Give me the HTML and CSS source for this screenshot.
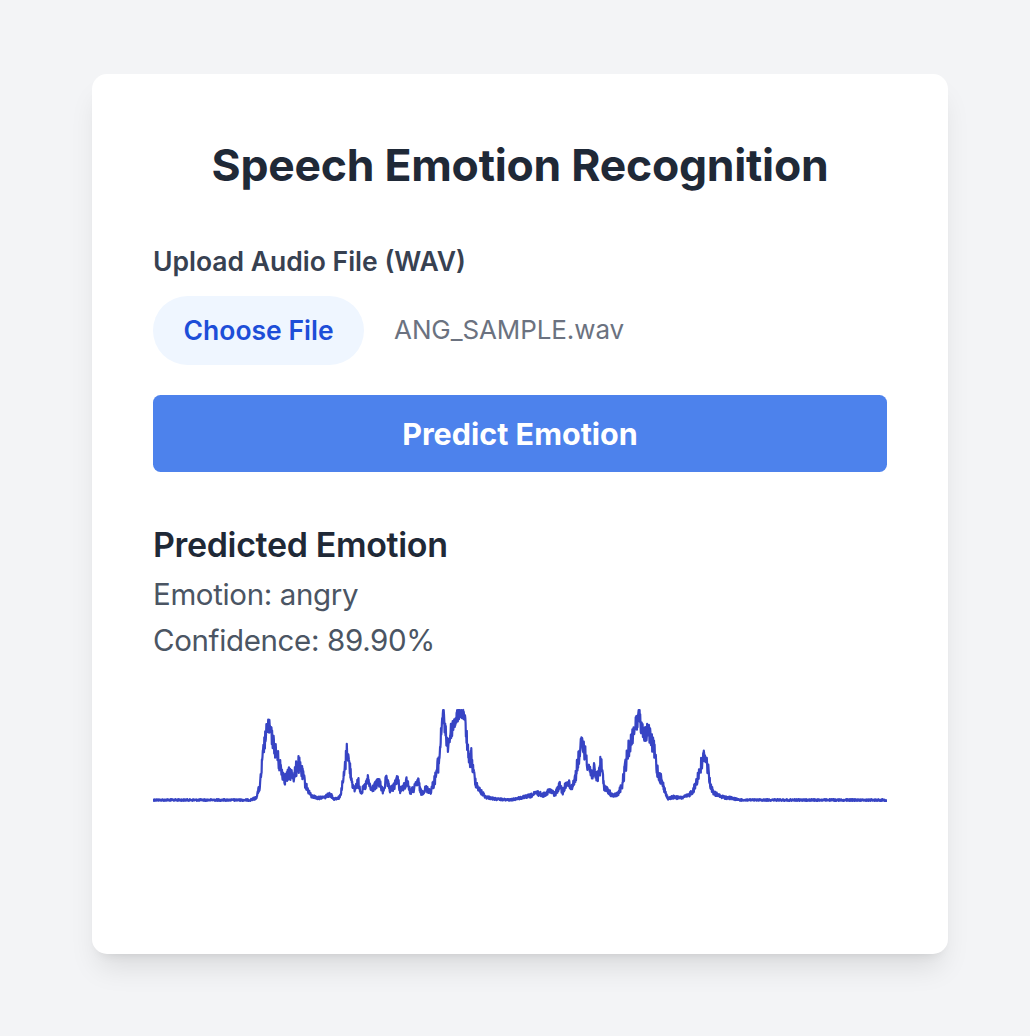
FILE: index.html
```html
<!DOCTYPE html>
<html lang="en">
<head>
<meta charset="utf-8">
<title>Speech Emotion Recognition</title>
<link rel="stylesheet" href="styles.css">
</head>
<body>
<main class="card">
  <h1 class="title">Speech Emotion Recognition</h1>
  <label class="field-label">Upload Audio File (WAV)</label>
  <div class="file-row">
    <span class="file-btn">Choose File</span>
    <span class="file-name">ANG_SAMPLE.wav</span>
  </div>
  <button class="predict-btn" type="button">Predict Emotion</button>
  <section class="result">
    <h2 class="result-title">Predicted Emotion</h2>
    <p class="result-line">Emotion: angry</p>
    <p class="result-line">Confidence: 89.90%</p>
  </section>
  <svg class="waveform" id="waveform" viewBox="0 0 734 199" width="734" height="199" xmlns="http://www.w3.org/2000/svg">
    <path id="wave-path" d="" fill="none" stroke="#3744c4" stroke-width="2.2" stroke-linejoin="round" stroke-linecap="round"/>
  </svg>
</main>
<script src="wave.js"></script>
</body>
</html>
```

FILE: styles.css
```css
* { box-sizing: border-box; }

body {
  margin: 0;
  background: #f3f4f6;
  font-family: Inter, "Noto Sans", "Liberation Sans", sans-serif;
  min-height: 1036px;
}

.card {
  width: 856px;
  margin: 74px 0 0 92px;
  padding: 61px;
  background: #ffffff;
  border-radius: 15px;
  box-shadow: 0 19px 29px -6px rgba(0, 0, 0, 0.1), 0 8px 11px -8px rgba(0, 0, 0, 0.1);
  display: flex;
  flex-direction: column;
}

.title {
  margin: 0 0 46px;
  font-size: 44.5px;
  line-height: 61px;
  font-weight: 700;
  color: #1f2937;
  text-align: center;
  letter-spacing: -0.25px;
}

.field-label {
  display: block;
  font-size: 26.5px;
  line-height: 38px;
  font-weight: 600;
  color: #374151;
  margin-bottom: 15.5px;
}

.file-row {
  display: flex;
  align-items: center;
}

.file-btn {
  display: inline-block;
  padding: 15.5px 30.5px;
  border-radius: 999px;
  background: #eff6ff;
  color: #1d4ed8;
  font-size: 26.5px;
  line-height: 38px;
  font-weight: 600;
}

.file-name {
  margin-left: 30px;
  font-size: 26px;
  line-height: 38px;
  color: #6b7280;
  letter-spacing: -0.1px;
}

.predict-btn {
  margin-top: 30.5px;
  height: 76.5px;
  width: 100%;
  border: 0;
  border-radius: 7.6px;
  background: #4d82ec;
  color: #ffffff;
  font-family: inherit;
  font-size: 30.5px;
  font-weight: 700;
}

.result {
  margin-top: 46px;
}

.result-title {
  margin: 0;
  font-size: 34px;
  line-height: 53.5px;
  font-weight: 600;
  color: #1f2937;
  letter-spacing: -0.35px;
}

.result-line {
  margin: 0;
  font-size: 29.5px;
  line-height: 46px;
  color: #4b5563;
  letter-spacing: -0.35px;
}

.waveform {
  display: block;
  margin-top: 30.5px;
}
```

FILE: wave.js
```js
(function () {
  var pts = [
    [153,799],[250,799],[256,797],[260,785],[264,745],[268,723],[271,733],[275,748],[280,765],[285,778],
    [290,772],[294,775],[298,762],[302,772],[306,785],[311,795],[318,797],[325,796],[330,793],[334,798],
    [340,796],[344,775],[347,748],[350,768],[354,790],[358,780],[361,791],[365,786],[368,779],[371,789],
    [375,785],[379,781],[383,791],[386,779],[390,789],[394,786],[397,776],[400,789],[404,786],[407,779],
    [410,791],[414,788],[418,780],[421,792],[426,788],[431,790],[435,778],[439,760],[441,735],[443,708],
    [445,730],[448,745],[451,730],[454,722],[457,715],[460,708],[464,712],[467,740],[469,765],[471,752],
    [473,770],[476,782],[480,790],[486,796],[495,798],[510,799],[520,797],[530,795],[537,792],[543,794],
    [549,790],[555,793],[560,784],[563,792],[567,780],[571,787],[575,778],[579,755],[582,741],[585,752],
    [588,762],[591,773],[594,770],[597,778],[601,762],[604,785],[608,790],[613,795],[618,793],[622,785],
    [625,768],[628,750],[631,740],[634,728],[637,720],[639,712],[642,730],[645,735],[648,727],[651,740],
    [654,748],[657,768],[661,778],[665,790],[668,798],[673,796],[680,797],[688,795],[694,788],[698,775],
    [702,762],[705,752],[708,768],[711,787],[715,793],[722,796],[730,797],[740,799],[887,799]
  ];
  var seed = 12345;
  function rnd() {
    seed = (seed * 1103515245 + 12345) & 0x7fffffff;
    return seed / 0x7fffffff;
  }
  function env(x) {
    for (var i = 0; i < pts.length - 1; i++) {
      if (x >= pts[i][0] && x <= pts[i + 1][0]) {
        var t = (x - pts[i][0]) / (pts[i + 1][0] - pts[i][0]);
        return pts[i][1] + t * (pts[i + 1][1] - pts[i][1]);
      }
    }
    return 799;
  }
  var d = '';
  var ox = 153, oy = 693;
  for (var x = 153; x <= 887; x += 0.3) {
    var e = env(x);
    var amp = 0.9 + (799 - e) * 0.24;
    if (amp > 9) amp = 9;
    var y = e + (rnd() - 0.5) * 2 * amp;
    if (y < 709) y = 709;
    if (y > 803) y = 803;
    d += (d ? 'L' : 'M') + (x - ox).toFixed(2) + ' ' + (y - oy).toFixed(2);
  }
  document.getElementById('wave-path').setAttribute('d', d);
})();
```
